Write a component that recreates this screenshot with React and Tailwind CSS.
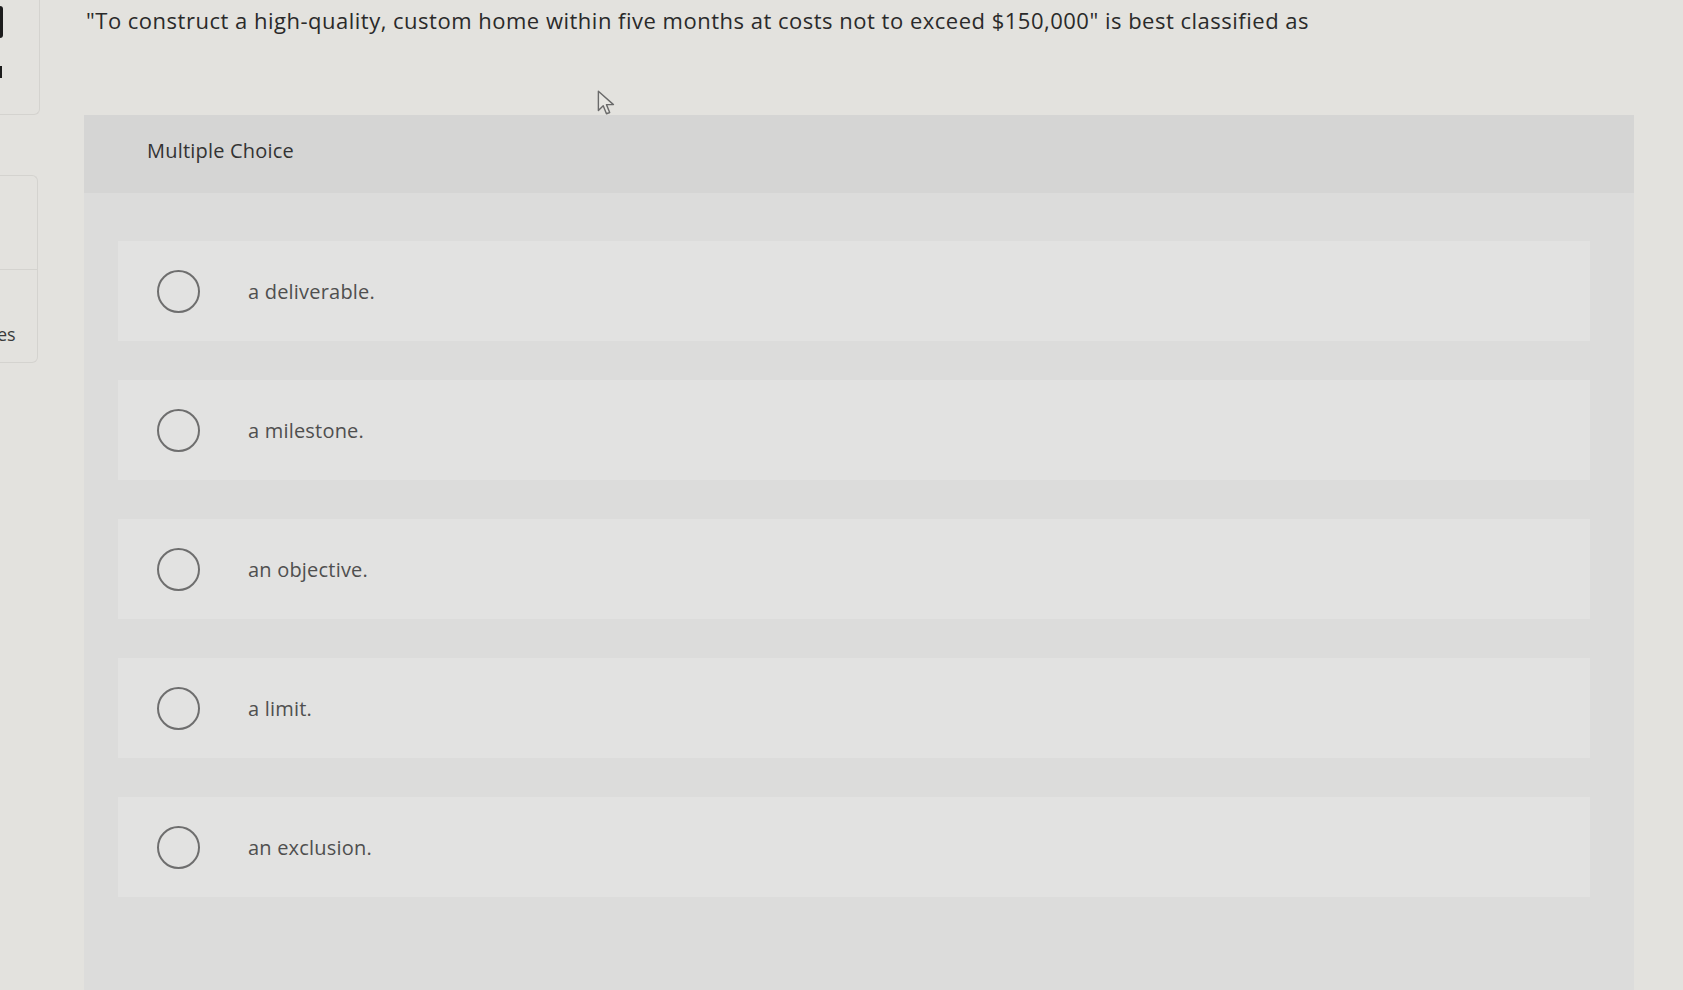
export default function App() {
  const options = [
    "a deliverable.",
    "a milestone.",
    "an objective.",
    "a limit.",
    "an exclusion.",
  ];
  return (
    <div
      className="w-full h-[990px] overflow-hidden flex bg-[#e3e2de] text-[#2e2e2e]"
      style={{ fontFamily: "'Open Sans', Lato, sans-serif" }}
    >
      {/* left sidebar edge */}
      <div className="w-[40px] shrink-0 flex flex-col relative">
        <div className="absolute left-0 top-[6px] w-[3px] h-[32px] bg-[#1c1c1c] rounded-r-full" />
        <div className="absolute left-0 top-[66px] w-[2px] h-[12px] bg-[#1c1c1c]" />
        <div className="h-[115px] border-r border-b border-[#d4d3cf] rounded-br-md" />
        <div className="h-[60px]" />
        <div className="h-[94px] border-r border-t border-[#d4d3cf] rounded-tr-md mr-[2px]" />
        <div className="h-[94px] border-r border-t border-b border-[#d4d3cf] rounded-br-md mr-[2px] flex items-center">
          <span className="text-[18px] text-[#3a3a3a] -ml-[3px] mt-[36px]">es</span>
        </div>
        <div className="flex-1" />
      </div>

      {/* main */}
      <div className="flex-1 flex flex-col pl-[44px] relative">
        <div className="pt-[6px] h-[115px] pl-[2px] text-[22px] leading-[28px] text-[#2a2a2a] tracking-[0.5px] whitespace-nowrap">
          "To construct a high-quality, custom home within five months at costs not to exceed $150,000" is best classified as
        </div>

        {/* cursor */}
        <svg
          className="absolute left-[556px] top-[89px]"
          width="22"
          height="28"
          viewBox="0 0 20 26"
          fill="none"
        >
          <path
            d="M2 2 L2 20 L6.5 15.5 L9.5 23 L12.5 21.8 L9.5 14.5 L16 14.5 Z"
            fill="#e8e7e3"
            stroke="#6a6a6a"
            strokeWidth="1.3"
            strokeLinejoin="round"
          />
        </svg>

        <div className="w-[1550px] flex-1 bg-[#dcdcdb] flex flex-col">
          <div className="h-[78px] bg-[#d5d5d4] flex items-center pl-[63px] pb-[6px] text-[20px] tracking-[0.2px] text-[#333333]">
            Multiple Choice
          </div>
          <div className="flex flex-col gap-[39px] pt-[48px] pl-[34px] pr-[44px]">
            {options.map((o) => (
              <div
                key={o}
                className="h-[100px] bg-[#e2e2e1] flex items-center pl-[39px]"
              >
                <div className="w-[43px] h-[43px] rounded-full border-[2px] border-[#6e6e6e] shrink-0" />
                <div className="ml-[48px] text-[20px] tracking-[0.2px] text-[#4f4f4f] mt-[2px]">
                  {o}
                </div>
              </div>
            ))}
          </div>
        </div>
      </div>
    </div>
  );
}
